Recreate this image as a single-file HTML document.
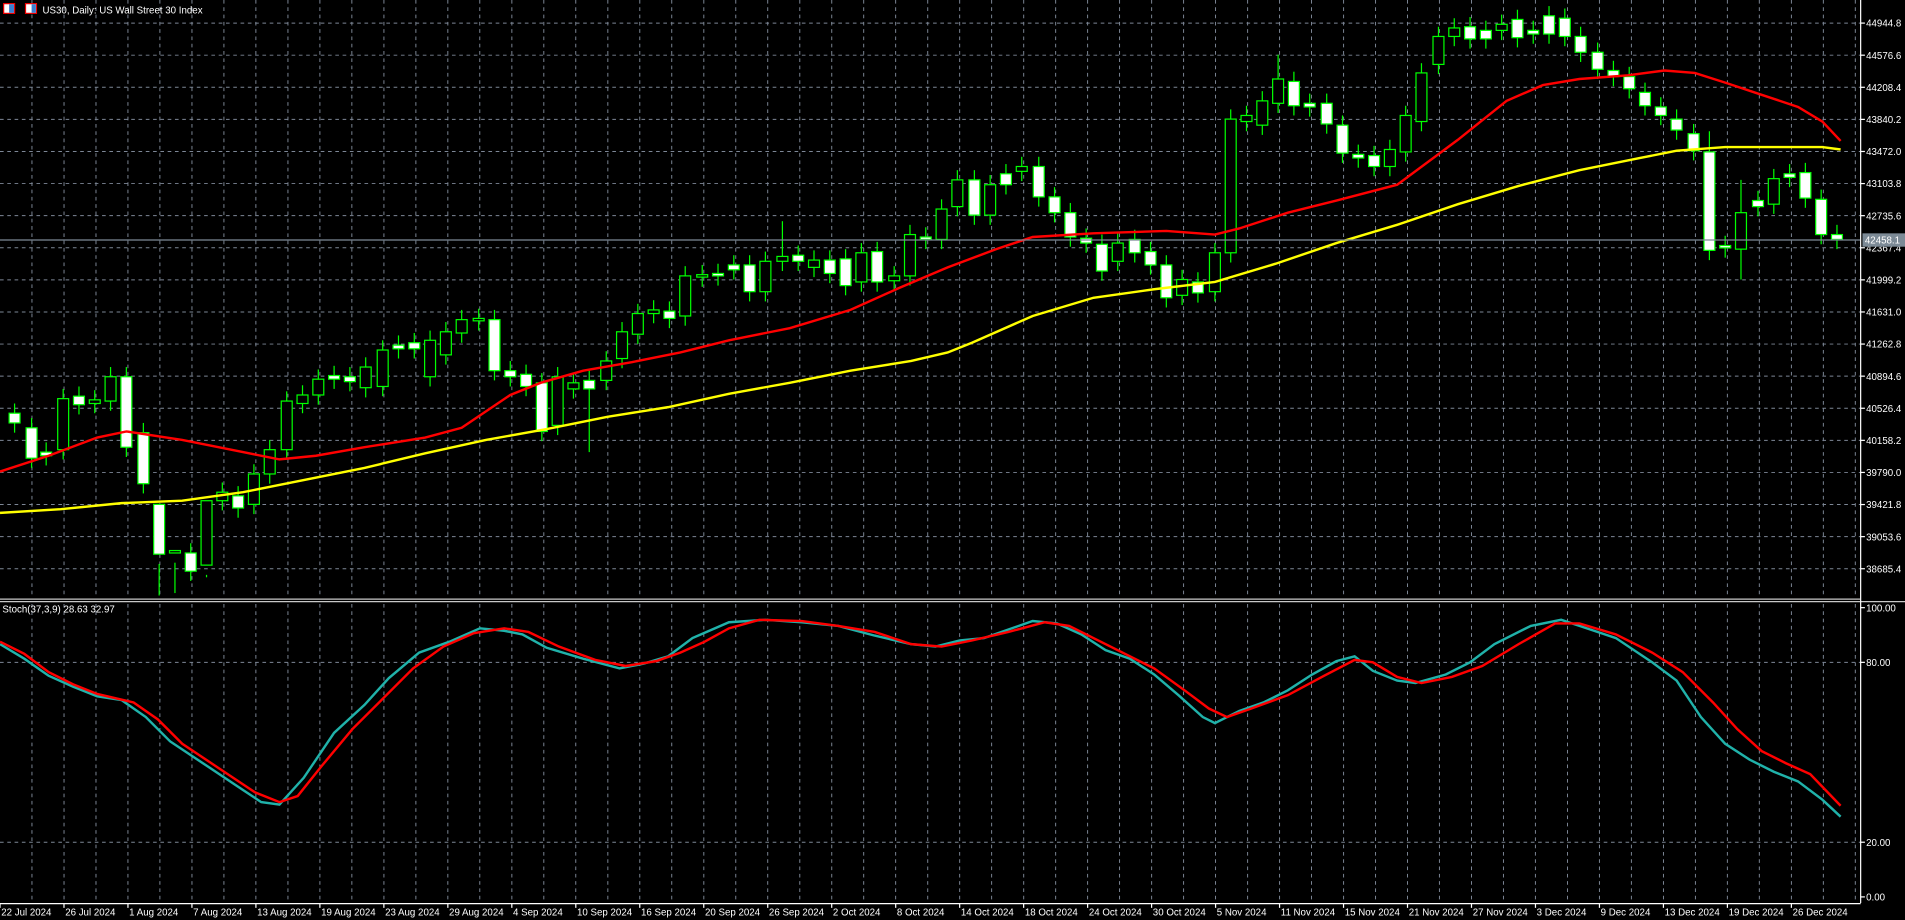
<!DOCTYPE html>
<html><head><meta charset="utf-8"><style>
html,body{margin:0;padding:0;background:#000;overflow:hidden}
svg{display:block}
text{font-family:"Liberation Sans",sans-serif;fill:#fff;font-size:8px}
</style></head><body>
<svg id="s" width="1905" height="920" viewBox="0 0 1568 757" preserveAspectRatio="none" xmlns="http://www.w3.org/2000/svg">
<rect width="1568" height="757" fill="#000"/>
<g id="grid" stroke="#7d8796" stroke-width="0.8" stroke-dasharray="3,3"></g>
<g id="candles"></g>
<polyline id="red" fill="none" stroke="#ff0000" stroke-width="2" points="0,388 40,375 80,360 104,355 150,362 200,372 230,378 260,375 300,368 350,360 380,352 420,325 445,315 480,305 520,298 560,290 600,280 650,270 700,255 740,237 780,220 820,205 850,195 900,192 960,190 1000,193 1020,188 1060,175 1100,165 1150,152 1200,115 1240,83 1270,70 1300,65 1340,62 1370,58 1395,60 1420,68 1450,78 1480,88 1500,100 1515,116"/>
<polyline fill="none" stroke="#ffff00" stroke-width="2" points="0,422 50,419 100,414 150,412 200,405 250,395 300,385 350,373 400,362 450,353 500,343 550,335 600,324 650,315 700,305 750,297 780,290 800,282 850,260 900,245 950,238 1000,232 1050,217 1100,200 1150,185 1200,168 1250,153 1300,140 1350,130 1380,124 1420,121 1460,121 1500,121 1515,123"/>
<line x1="0" y1="197.5" x2="1531" y2="197.5" stroke="#7c8a96" stroke-width="1"/>
<polyline fill="none" stroke="#20b2aa" stroke-width="2" points="0,530 20,542 40,556 60,565 80,573 100,576 120,590 140,610 170,630 200,650 215,660 230,662 250,640 275,603 300,580 320,558 345,537 370,528 395,517 415,519 430,522 450,533 480,542 510,550 530,546 550,540 570,525 600,512 630,510 660,512 690,515 720,523 750,530 770,532 790,527 810,525 830,518 850,511 870,513 890,522 910,535 930,542 950,555 970,572 990,590 1000,595 1020,585 1040,578 1060,568 1080,555 1100,544 1115,540 1130,552 1150,560 1165,562 1190,555 1210,545 1230,530 1260,515 1285,510 1300,515 1330,525 1360,545 1380,560 1400,590 1420,612 1440,625 1460,635 1480,643 1500,658 1515,672"/>
<polyline fill="none" stroke="#ff0000" stroke-width="2" points="0,528 20,538 40,553 60,563 80,571 110,578 130,592 150,612 180,632 210,652 230,660 245,655 265,630 290,600 315,575 340,550 365,532 390,521 415,517 435,520 460,532 490,543 515,548 540,544 560,537 580,528 600,517 625,510 660,511 690,515 720,520 750,530 775,532 800,527 830,520 860,512 880,515 900,525 920,535 950,550 975,568 995,583 1010,590 1030,583 1060,572 1090,556 1115,543 1130,545 1150,557 1170,562 1195,557 1220,548 1250,530 1280,513 1300,513 1330,522 1360,537 1385,553 1410,578 1430,600 1450,618 1470,628 1490,637 1515,663"/>
<line x1="0" y1="493" x2="1531" y2="493" stroke="#c8c8c8" stroke-width="1"/>
<line x1="0" y1="495" x2="1568" y2="495" stroke="#c8c8c8" stroke-width="1"/>
<line x1="1531.5" y1="0" x2="1531.5" y2="743" stroke="#fff" stroke-width="1"/>
<line x1="0" y1="743.5" x2="1531.5" y2="743.5" stroke="#fff" stroke-width="1"/>
<g id="labels"></g>
<rect x="1533" y="192" width="35" height="11" fill="#7c8a96"/>
<text x="1535" y="200.5">42458.1</text>
<rect x="3" y="3" width="9" height="8" fill="#fff" stroke="#e00" stroke-width="1"/>
<rect x="7.5" y="3.5" width="4" height="7" fill="#3a7fd0"/>
<rect x="21" y="3" width="9" height="8" fill="#fff" stroke="#e00" stroke-width="1"/>
<rect x="26" y="3.5" width="3.5" height="7" fill="#3a7fd0"/>
<text x="35" y="11" font-size="8.5">US30, Daily:  US Wall Street 30 Index</text>
<text x="2" y="504" font-size="7.5">Stoch(37,3,9) 28.63 32.97</text>
</svg>
<script>
const NS="http://www.w3.org/2000/svg";
function el(p,t,a,txt){const e=document.createElementNS(NS,t);for(const k in a)e.setAttribute(k,a[k]);if(txt)e.textContent=txt;p.appendChild(e);return e;}
const g=document.getElementById('grid'),L=document.getElementById('labels'),C=document.getElementById('candles');
// vertical grid
for(let k=1;k*26.33<1531;k++){const x=(k*26.33).toFixed(1);el(g,'line',{x1:x,y1:0,x2:x,y2:492});el(g,'line',{x1:x,y1:497,x2:x,y2:743});}
const prices=["44944.8","44576.6","44208.4","43840.2","43472.0","43103.8","42735.6","42367.4","41999.2","41631.0","41262.8","40894.6","40526.4","40158.2","39790.0","39421.8","39053.6","38685.4"];
prices.forEach((p,i)=>{const y=19+i*26.41;el(g,'line',{x1:0,y1:y,x2:1531,y2:y});
el(L,'line',{x1:1531,y1:y,x2:1535,y2:y,stroke:'#fff'});el(L,'text',{x:1536,y:y+3},p);});
[[100,500],[80,545],[20,693],[0,738]].forEach(([v,y])=>{if(v==80||v==20)el(g,'line',{x1:0,y1:y,x2:1531,y2:y});
el(L,'line',{x1:1531,y1:y,x2:1535,y2:y,stroke:'#fff'});el(L,'text',{x:1536,y:y+3},v.toFixed(2));});
const dates=["22 Jul 2024","26 Jul 2024","1 Aug 2024","7 Aug 2024","13 Aug 2024","19 Aug 2024","23 Aug 2024","29 Aug 2024","4 Sep 2024","10 Sep 2024","16 Sep 2024","20 Sep 2024","26 Sep 2024","2 Oct 2024","8 Oct 2024","14 Oct 2024","18 Oct 2024","24 Oct 2024","30 Oct 2024","5 Nov 2024","11 Nov 2024","15 Nov 2024","21 Nov 2024","27 Nov 2024","3 Dec 2024","9 Dec 2024","13 Dec 2024","19 Dec 2024","26 Dec 2024"];
dates.forEach((d,i)=>{const x=i*52.66;el(L,'line',{x1:x,y1:743,x2:x,y2:747,stroke:'#fff'});el(L,'text',{x:x+1,y:753.5,'font-size':'7.5'},d);});
const cd=[[12,340,348,'w'],[26,352,377,'w'],[38,372,375,'w'],[52,328,370,'g'],[65,326,333,'w'],[78,329,332,'g'],[91,310,330,'g'],[104,310,368,'w'],[118,356,398,'w'],[131,415,456,'w',490],[144,453,455,'g',488],[157,455,470,'w'],[170,412,465,'g',475],[183,405,412,'g'],[196,408,418,'w'],[209,390,415,'g'],[222,370,390,'g'],[236,330,370,'g'],[249,325,332,'g'],[262,312,325,'g'],[275,309,312,'w'],[288,310,314,'w'],[301,302,319,'g'],[315,288,318,'g'],[328,284,287,'w'],[341,282,287,'w'],[354,280,310,'g'],[367,273,292,'g'],[380,263,274,'g'],[394,262,264,'g'],[407,263,305,'w'],[420,305,310,'w'],[433,308,318,'w'],[446,315,355,'w'],[459,310,350,'g'],[472,315,320,'g'],[485,313,320,'w',null,372],[499,297,313,'g'],[512,273,295,'g'],[525,258,275,'g'],[538,255,258,'g'],[551,256,262,'w'],[564,227,260,'g'],[578,226,228,'g'],[591,225,227,'w'],[604,218,222,'w'],[617,218,240,'w'],[630,215,240,'g'],[644,211,215,'g',182],[657,210,215,'w'],[670,214,220,'g'],[683,214,225,'w'],[696,213,235,'w'],[709,208,232,'g'],[722,207,232,'w'],[736,227,231,'g'],[749,193,227,'g'],[762,195,197,'w'],[775,172,197,'g'],[788,148,170,'g'],[802,148,177,'w'],[815,152,177,'g'],[828,143,152,'w'],[841,137,141,'g'],[855,137,162,'w'],[868,162,175,'w'],[881,175,195,'w'],[894,196,200,'w'],[907,201,223,'w'],[920,200,215,'g'],[934,197,208,'w'],[947,207,218,'w'],[960,218,245,'w'],[973,230,243,'g'],[986,232,241,'w'],[1000,208,240,'g'],[1013,98,208,'g'],[1026,95,100,'g'],[1039,83,103,'g'],[1052,65,85,'g',45],[1065,67,87,'w'],[1078,85,88,'w'],[1092,85,102,'w'],[1105,103,126,'w'],[1118,127,130,'w'],[1131,128,137,'w'],[1144,123,137,'g'],[1157,95,125,'g'],[1170,60,100,'g'],[1184,30,53,'g'],[1197,23,30,'g'],[1210,22,32,'w'],[1223,25,32,'w'],[1236,20,25,'g'],[1249,16,31,'w'],[1262,25,28,'w'],[1275,13,28,'w'],[1288,15,30,'w'],[1301,30,43,'w'],[1315,43,57,'w'],[1328,58,63,'w'],[1341,63,73,'w'],[1354,76,87,'w'],[1367,88,95,'w'],[1380,98,107,'w'],[1394,110,124,'w'],[1407,125,206,'w',108],[1420,202,204,'w'],[1433,175,205,'g',148,230],[1447,165,170,'w'],[1460,147,168,'g'],[1473,143,146,'w'],[1486,142,163,'w'],[1499,164,193,'w'],[1512,193,197,'w']];
cd.forEach(c=>{const [x,t,b,ty,hi,lo]=c;const h=hi||t-8,l=lo||b+8;
el(C,'line',{x1:x,y1:h,x2:x,y2:l,stroke:'#00ff00','stroke-width':1});
el(C,'rect',{x:x-4.5,y:t,width:9,height:Math.max(b-t,1.5),fill:ty=='w'?'#fff':'#000',stroke:'#00ff00','stroke-width':1});});
</script>
</body></html>
